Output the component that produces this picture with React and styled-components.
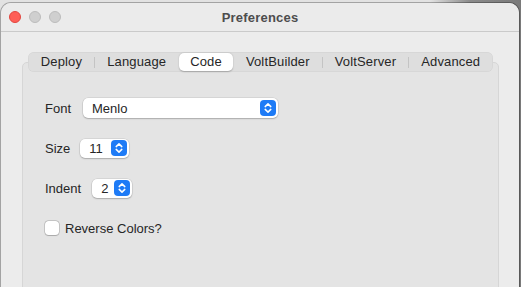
import React from 'react';
import styled, { createGlobalStyle, css } from 'styled-components';

const GlobalStyle = createGlobalStyle`
    html, body {
        margin: 0;
        padding: 0;
    }
    body {
        font-family: "Liberation Sans", Arial, sans-serif;
        font-size: 13px;
        color: #262626;
    }
`;

const Desktop = styled.div`
    width: 521px;
    height: 287px;
    overflow: hidden;
    box-sizing: border-box;
    padding: 3px 2px 0 1px;
    background: linear-gradient(90deg, #e2e2e2 0, #e2e2e2 430px, #8b8b8b 470px, #7a7a7a 100%);
`;

const Window = styled.div`
    width: 518px;
    height: 300px;
    background: #ececec;
    border-radius: 10px 10px 0 0;
    box-shadow: 0 0 0 1px rgba(0, 0, 0, 0.28);
    display: flex;
    flex-direction: column;
`;

const TitleBar = styled.div`
    height: 28px;
    display: grid;
    grid-template-columns: 1fr auto 1fr;
    align-items: center;
    padding: 0 8px;
    border-bottom: 1px solid #cacaca;
    background: #ebebeb;
    border-radius: 10px 10px 0 0;
`;

const Lights = styled.div`
    display: flex;
    gap: 8px;
`;

const Light = styled.span`
    width: 12px;
    height: 12px;
    border-radius: 50%;
    box-sizing: border-box;
    background: ${p => (p.red ? '#fe5f57' : '#cfcfcf')};
    border: 0.5px solid ${p => (p.red ? '#e2463f' : '#bcbcbc')};
`;

const Title = styled.div`
    font-weight: 700;
    font-size: 13px;
    color: #4d4d4d;
    letter-spacing: 0.2px;
`;

const Content = styled.div`
    padding: 20px 20px 0 21px;
    display: flex;
    flex-direction: column;
    align-items: center;
`;

const Segments = styled.div`
    position: relative;
    z-index: 1;
    display: flex;
    align-items: center;
    height: 20px;
    padding: 0 1px;
    margin-bottom: -10px;
    background: #dedede;
    border-radius: 6px;
    box-shadow: inset 0 0 0 0.5px rgba(0, 0, 0, 0.06);
`;

const Segment = styled.div`
    height: 18px;
    line-height: 18px;
    padding: 0 12px;
    border-radius: 5px;
    color: #262626;
    letter-spacing: 0.15px;
    white-space: nowrap;
    ${p =>
        p.active &&
        css`
            padding: 0 11px;
            margin: 0 1px;
            background: #ffffff;
            box-shadow: 0 0.5px 1.5px rgba(0, 0, 0, 0.25);
        `}
`;

const Divider = styled.span`
    width: 1px;
    height: 11px;
    background: ${p => (p.hidden ? 'transparent' : '#c4c4c4')};
`;

const TabBox = styled.div`
    align-self: stretch;
    height: 240px;
    box-sizing: border-box;
    background: #e4e4e4;
    border: 1px solid #d6d6d6;
    border-radius: 5px;
    padding: 35px 22px 0 22px;
    display: flex;
    flex-direction: column;
    gap: 20px;
`;

const Row = styled.div`
    display: flex;
    align-items: center;
    height: 20px;
    gap: ${p => p.gap || 10}px;
`;

const Popup = styled.div`
    width: ${p => p.width}px;
    height: ${p => p.height || 19}px;
    box-sizing: border-box;
    background: #ffffff;
    border-radius: 5px;
    box-shadow: 0 0 0 0.5px rgba(0, 0, 0, 0.12), 0 1px 1.5px rgba(0, 0, 0, 0.2);
    display: flex;
    align-items: center;
    justify-content: space-between;
    padding: 0 2px 0 ${p => p.pad || 9}px;
`;

const Stepper = styled.span`
    width: 16px;
    height: 16px;
    border-radius: 4px;
    background: #1e7bf6;
    display: flex;
    align-items: center;
    justify-content: center;
`;

const Check = styled.span`
    width: 14px;
    height: 14px;
    box-sizing: border-box;
    border-radius: 3.5px;
    background: #ffffff;
    box-shadow: 0 0 0 0.5px rgba(0, 0, 0, 0.25), 0 0.5px 1px rgba(0, 0, 0, 0.15);
`;

const Chevrons = () => (
    <svg width="16" height="16" viewBox="0 0 16 16">
        <path d="M5.2 6.6 L8 3.9 L10.8 6.6" fill="none" stroke="#fff" strokeWidth="1.5" strokeLinecap="round" strokeLinejoin="round" />
        <path d="M5.2 9.4 L8 12.1 L10.8 9.4" fill="none" stroke="#fff" strokeWidth="1.5" strokeLinecap="round" strokeLinejoin="round" />
    </svg>
);

const tabs = ['Deploy', 'Language', 'Code', 'VoltBuilder', 'VoltServer', 'Advanced'];
const activeTab = 2;

export default function App() {
    return (
        <Desktop>
            <GlobalStyle />
            <Window>
                <TitleBar>
                    <Lights>
                        <Light red />
                        <Light />
                        <Light />
                    </Lights>
                    <Title>Preferences</Title>
                    <span />
                </TitleBar>
                <Content>
                    <Segments>
                        {tabs.map((t, i) => (
                            <React.Fragment key={t}>
                                {i > 0 && <Divider hidden={i === activeTab || i - 1 === activeTab} />}
                                <Segment active={i === activeTab}>{t}</Segment>
                            </React.Fragment>
                        ))}
                    </Segments>
                    <TabBox>
                        <Row gap={12}>
                            <span>Font</span>
                            <Popup width={195} height={20}>
                                <span>Menlo</span>
                                <Stepper><Chevrons /></Stepper>
                            </Popup>
                        </Row>
                        <Row>
                            <span>Size</span>
                            <Popup width={49}>
                                <span>11</span>
                                <Stepper><Chevrons /></Stepper>
                            </Popup>
                        </Row>
                        <Row gap={11}>
                            <span>Indent</span>
                            <Popup width={40} pad={9}>
                                <span>2</span>
                                <Stepper><Chevrons /></Stepper>
                            </Popup>
                        </Row>
                        <Row gap={6}>
                            <Check />
                            <span>Reverse Colors?</span>
                        </Row>
                    </TabBox>
                </Content>
            </Window>
        </Desktop>
    );
}
